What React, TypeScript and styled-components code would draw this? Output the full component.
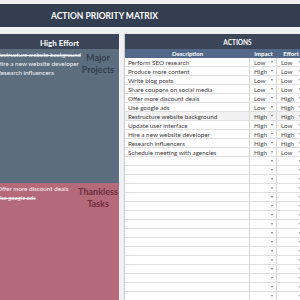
import styled, { createGlobalStyle } from 'styled-components';

const GlobalStyle = createGlobalStyle`
  html, body {
    margin: 0;
    padding: 0;
    background: #eef0f2;
    overflow: hidden;
  }
  * {
    box-sizing: border-box;
  }
`;

const Page = styled.div`
  width: 300px;
  height: 300px;
  display: flex;
  flex-direction: column;
  padding-top: 4px;
  font-family: Lato, 'Liberation Sans', sans-serif;
  overflow: hidden;
`;

const TitleBar = styled.header`
  height: 23px;
  flex-shrink: 0;
  display: flex;
  align-items: center;
  padding-left: 51px;
  background: #333f50;
  color: #ffffff;
  font-size: 8.5px;
  font-weight: 700;
`;

const Board = styled.main`
  flex: 1;
  min-height: 0;
  margin-top: 7px;
  display: grid;
  grid-template-columns: 120px 1fr;
  column-gap: 4px;
`;

const LeftPanel = styled.section`
  display: flex;
  flex-direction: column;
  border-right: 1px solid #f7f7f7;
  overflow: hidden;
`;

const PanelHeader = styled.div`
  height: 15px;
  flex-shrink: 0;
  display: flex;
  align-items: center;
  justify-content: center;
  padding-top: 2px;
  background: #3a4658;
  color: #ffffff;
  font-size: 8px;
  font-weight: 700;
`;

const Quadrant = styled.div<{ $bg: string; $height?: number }>`
  flex: ${(p) => (p.$height ? `0 0 ${p.$height}px` : '1')};
  display: grid;
  grid-template-columns: 77px 1fr;
  background: ${(p) => p.$bg};
`;

const ItemList = styled.ul`
  list-style: none;
  margin: 1px 0 0 -3px;
  padding: 0;
  white-space: nowrap;
`;

const Item = styled.li<{ $done?: boolean }>`
  height: 9px;
  line-height: 9px;
  font-size: 6.3px;
  color: #f3f3f3;
  text-decoration: ${(p) => (p.$done ? 'line-through' : 'none')};
  font-style: ${(p) => (p.$done ? 'italic' : 'normal')};
`;

const QuadrantLabel = styled.div<{ $color: string }>`
  padding-top: 3px;
  text-align: center;
  font-size: 9px;
  font-weight: 700;
  line-height: 12px;
  color: ${(p) => p.$color};
`;

const RightPanel = styled.section`
  display: flex;
  flex-direction: column;
  border-left: 1px solid #c9cbce;
  overflow: hidden;
`;

const ActionsHeader = styled(PanelHeader)`
  padding-left: 50px;
  font-size: 6.5px;
`;

const Row = styled.div<{ $hover?: boolean }>`
  height: 9px;
  flex-shrink: 0;
  display: grid;
  grid-template-columns: 125px 27px 28px;
  background: ${(p) => (p.$hover ? '#f1f1f1' : '#ffffff')};
  border-bottom: 1px solid #dedede;
`;

const HeadRow = styled(Row)`
  background: #52698a;
  border-bottom: none;
`;

const HeadCell = styled.div`
  display: flex;
  align-items: center;
  justify-content: center;
  color: #ffffff;
  font-size: 6px;
  font-weight: 700;
`;

const DescCell = styled.div`
  display: flex;
  align-items: center;
  padding-left: 3px;
  border-right: 1px solid #d6d6d6;
  color: #3b3b3b;
  font-size: 6.3px;
  white-space: nowrap;
  overflow: hidden;
`;

const ValueCell = styled.div`
  display: flex;
  align-items: center;
  justify-content: space-between;
  padding: 0 3px 0 4px;
  border-right: 1px solid #d6d6d6;
  color: #4a4a4a;
  font-size: 6.3px;
`;

const Arrow = styled.span`
  width: 0;
  height: 0;
  margin-left: auto;
  border-left: 1.5px solid transparent;
  border-right: 1.5px solid transparent;
  border-top: 2px solid #7a7a7a;
`;

type Level = 'Low' | 'High' | '';

const actions: { text: string; impact: Level; effort: Level }[] = [
  { text: 'Perform SEO research', impact: 'Low', effort: 'Low' },
  { text: 'Produce more content', impact: 'High', effort: 'Low' },
  { text: 'Write blog posts', impact: 'Low', effort: 'Low' },
  { text: 'Share coupons on social media', impact: 'Low', effort: 'Low' },
  { text: 'Offer more discount deals', impact: 'Low', effort: 'High' },
  { text: 'Use google ads', impact: 'Low', effort: 'High' },
  { text: 'Restructure website background', impact: 'High', effort: 'High' },
  { text: 'Update user interface', impact: 'High', effort: 'Low' },
  { text: 'Hire a new website developer', impact: 'High', effort: 'High' },
  { text: 'Research influencers', impact: 'High', effort: 'High' },
  { text: 'Schedule meeting with agencies', impact: 'High', effort: 'Low' },
];

const rows = [
  ...actions,
  ...Array.from({ length: 17 }, () => ({ text: '', impact: '' as Level, effort: '' as Level })),
];

export default function App() {
  return (
    <>
      <GlobalStyle />
      <Page>
        <TitleBar>ACTION PRIORITY MATRIX</TitleBar>
        <Board>
          <LeftPanel>
            <PanelHeader>High Effort</PanelHeader>
            <Quadrant $bg='#5d6d80' $height={134}>
              <ItemList>
                <Item $done>Restructure website background</Item>
                <Item>Hire a new website developer</Item>
                <Item>Research influencers</Item>
              </ItemList>
              <QuadrantLabel $color='#323e4e'>
                Major
                <br />
                Projects
              </QuadrantLabel>
            </Quadrant>
            <Quadrant $bg='#b56a79'>
              <ItemList>
                <Item>Offer more discount deals</Item>
                <Item $done>Use google ads</Item>
              </ItemList>
              <QuadrantLabel $color='#6d2e3e'>
                Thankless
                <br />
                Tasks
              </QuadrantLabel>
            </Quadrant>
          </LeftPanel>

          <RightPanel>
            <ActionsHeader>ACTIONS</ActionsHeader>
            <HeadRow>
              <HeadCell>Description</HeadCell>
              <HeadCell>Impact</HeadCell>
              <HeadCell>Effort</HeadCell>
            </HeadRow>
            {rows.map((row, i) => (
              <Row key={i} $hover={i === 6}>
                <DescCell>{row.text}</DescCell>
                <ValueCell>
                  {row.impact}
                  <Arrow />
                </ValueCell>
                <ValueCell>
                  {row.effort}
                  <Arrow />
                </ValueCell>
              </Row>
            ))}
          </RightPanel>
        </Board>
      </Page>
    </>
  );
}
